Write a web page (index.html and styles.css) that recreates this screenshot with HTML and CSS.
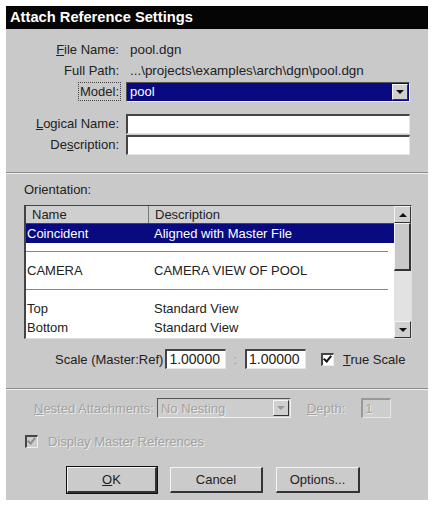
FILE: index.html
```html
<!DOCTYPE html>
<html lang="en">
<head>
    <meta charset="UTF-8">
    <meta name="viewport" content="width=device-width, initial-scale=1.0">
    <title>Attach Reference Settings</title>
    <link rel="stylesheet" href="styles.css">
</head>
<body>
    <div class="dialog">
        <div class="titlebar">Attach Reference Settings</div>

        <div class="form">
            <div class="row">
                <span class="label"><u>F</u>ile Name:</span>
                <span class="value">pool.dgn</span>
            </div>
            <div class="row">
                <span class="label">Full Path:</span>
                <span class="value">...\projects\examples\arch\dgn\pool.dgn</span>
            </div>
            <div class="row">
                <span class="label"><span class="focus">Model:</span></span>
                <div class="combo selected">
                    <span class="combo-text">pool</span>
                    <span class="combo-btn"><span class="arrow-down"></span></span>
                </div>
            </div>
            <div class="row row-gap">
                <span class="label"><u>L</u>ogical Name:</span>
                <div class="field"></div>
            </div>
            <div class="row">
                <span class="label">De<u>s</u>cription:</span>
                <div class="field"></div>
            </div>
        </div>

        <div class="sep"></div>

        <div class="orient">
            <div class="caption">Orientation:</div>
            <div class="listbox">
                <div class="list-main">
                    <div class="list-head">
                        <span class="col-name">Name</span>
                        <span class="col-desc">Description</span>
                    </div>
                    <div class="item item-sel">
                        <span class="col-name">Coincident</span>
                        <span class="col-desc">Aligned with Master File</span>
                    </div>
                    <div class="item-pad"></div>
                    <div class="item item-tall">
                        <span class="col-name">CAMERA</span>
                        <span class="col-desc">CAMERA VIEW OF POOL</span>
                    </div>
                    <div class="item-list">
                        <div class="item">
                            <span class="col-name">Top</span>
                            <span class="col-desc">Standard View</span>
                        </div>
                        <div class="item">
                            <span class="col-name">Bottom</span>
                            <span class="col-desc">Standard View</span>
                        </div>
                    </div>
                </div>
                <div class="scrollbar">
                    <span class="sb-btn"><span class="arrow-up"></span></span>
                    <span class="sb-thumb"></span>
                    <span class="sb-track"></span>
                    <span class="sb-btn"><span class="arrow-down"></span></span>
                </div>
            </div>

            <div class="scale-row">
                <span class="scale-label">Scale (Master:Ref)</span>
                <div class="field num">1.00000</div>
                <span class="colon">:</span>
                <div class="field num">1.00000</div>
                <span class="check checked"></span>
                <span class="check-label"><u>T</u>rue Scale</span>
            </div>
        </div>

        <div class="sep"></div>

        <div class="nested">
            <div class="nested-row">
                <span class="disabled"><u>N</u>ested Attachments:</span>
                <div class="combo combo-off">
                    <span class="combo-text disabled">No Nesting</span>
                    <span class="combo-btn"><span class="arrow-down arrow-off"></span></span>
                </div>
                <span class="disabled depth-label"><u>D</u>epth:</span>
                <div class="field field-off disabled">1</div>
            </div>
            <div class="display-row">
                <span class="check checked check-off"></span>
                <span class="disabled">Display Master References</span>
            </div>
        </div>

        <div class="buttons">
            <button class="btn btn-default"><u>O</u>K</button>
            <button class="btn btn-cancel">Cancel</button>
            <button class="btn btn-options">Options...</button>
        </div>
    </div>
</body>
</html>
```

FILE: styles.css
```css
body{
    margin: 0;
    background-color: #fff;
    font-family: "Liberation Sans", Arial, sans-serif;
    font-size: 13px;
    color: #222;
}
.dialog{
    margin: 6px 0 0 6px;
    width: 422px;
    height: 494px;
    background-color: #c9c9c9;
    display: flex;
    flex-direction: column;
}
.titlebar{
    height: 23px;
    line-height: 23px;
    background-color: #050505;
    color: #fff;
    font-weight: bold;
    font-size: 14.7px;
    padding-left: 4px;
}

/* top form */
.form{
    padding-top: 10px;
    display: flex;
    flex-direction: column;
}
.row{
    display: flex;
    align-items: center;
    height: 21px;
}
.row-gap{
    margin-top: 11px;
}
.label{
    width: 113px;
    text-align: right;
    flex-shrink: 0;
}
.value{
    margin-left: 11px;
    font-size: 13.4px;
}
.focus{
    outline: 1px dotted #444;
    outline-offset: 1px;
}
.combo{
    margin-left: 7px;
    width: 284px;
    height: 20px;
    box-sizing: border-box;
    border-top: 1px solid #555;
    border-left: 1px solid #555;
    border-bottom: 1px solid #eee;
    border-right: 1px solid #eee;
    display: flex;
    align-items: center;
}
.selected{
    background-color: #0a0a80;
    color: #fff;
}
.combo-text{
    flex: 1;
    padding-left: 3px;
}
.combo-btn{
    width: 16px;
    height: 16px;
    margin-right: 1px;
    box-sizing: border-box;
    background-color: #d0d0d0;
    border-top: 1px solid #f4f4f4;
    border-left: 1px solid #f4f4f4;
    border-right: 1px solid #333;
    border-bottom: 1px solid #333;
    display: flex;
    align-items: center;
    justify-content: center;
}
.arrow-down{
    width: 0;
    height: 0;
    border-left: 4px solid transparent;
    border-right: 4px solid transparent;
    border-top: 4px solid #111;
}
.arrow-up{
    width: 0;
    height: 0;
    border-left: 4px solid transparent;
    border-right: 4px solid transparent;
    border-bottom: 4px solid #111;
}
.field{
    margin-left: 7px;
    width: 284px;
    height: 20px;
    box-sizing: border-box;
    background-color: #fff;
    border-top: 2px solid #444;
    border-left: 2px solid #444;
    border-bottom: 1px solid #e6e6e6;
    border-right: 1px solid #e6e6e6;
}

.sep{
    height: 1px;
    background-color: #8a8a8a;
    border-bottom: 1px solid #f0f0f0;
}
.form + .sep{
    margin-top: 17px;
}

/* orientation list */
.orient{
    padding: 8px 0 0 18px;
}
.caption{
    height: 18px;
}
.listbox{
    margin-top: 5px;
    width: 388px;
    height: 134px;
    box-sizing: border-box;
    background-color: #fff;
    border-top: 1px solid #444;
    border-left: 2px solid #444;
    border-right: 1px solid #ddd;
    border-bottom: 1px solid #ddd;
    display: flex;
}
.list-main{
    flex: 1;
    display: flex;
    flex-direction: column;
}
.list-head{
    height: 18px;
    box-sizing: border-box;
    background-color: #cfcfcf;
    border-bottom: 1px solid #444;
    display: flex;
    align-items: center;
}
.list-head .col-name{
    border-right: 1px solid #777;
    height: 17px;
    line-height: 17px;
}
.item{
    height: 18px;
    display: flex;
    align-items: center;
}
.col-name{
    width: 116px;
    padding-left: 6px;
    flex-shrink: 0;
}
.col-desc{
    padding-left: 6px;
}
.item .col-name{
    padding-left: 1px;
    width: 121px;
}
.item-sel{
    height: 19px;
    background-color: #0a0a80;
    color: #fff;
}
.item-pad{
    height: 8px;
    border-bottom: 1px solid #888;
    margin-right: 6px;
}
.item-tall{
    height: 37px;
    border-bottom: 1px solid #888;
    margin-right: 6px;
}
.item-list{
    padding-top: 9px;
}
.item-list .item{
    height: 19px;
}
.scrollbar{
    width: 17px;
    display: flex;
    flex-direction: column;
}
.sb-btn{
    height: 17px;
    box-sizing: border-box;
    background-color: #d0d0d0;
    border-top: 1px solid #f4f4f4;
    border-left: 1px solid #f4f4f4;
    border-right: 1px solid #333;
    border-bottom: 1px solid #333;
    display: flex;
    align-items: center;
    justify-content: center;
}
.sb-thumb{
    height: 48px;
    box-sizing: border-box;
    background-color: #c9c9c9;
    border-top: 1px solid #f4f4f4;
    border-left: 1px solid #f4f4f4;
    border-right: 2px solid #333;
    border-bottom: 2px solid #333;
}
.sb-track{
    flex: 1;
    background-color: #e2e2e2;
}

.scale-row{
    display: flex;
    align-items: center;
    height: 22px;
    margin-top: 9px;
    margin-bottom: 18px;
    padding-left: 31px;
}
.scale-row .field{
    width: 61px;
    margin-left: 2px;
    line-height: 17px;
    padding-left: 2px;
    font-size: 14px;
}
.colon{
    margin-left: 7px;
    margin-right: 0;
    color: #999;
}
.colon + .field{
    margin-left: 8px;
}
.check{
    width: 13px;
    height: 13px;
    box-sizing: border-box;
    background-color: #fff;
    border-top: 2px solid #444;
    border-left: 2px solid #444;
    border-right: 1px solid #eee;
    border-bottom: 1px solid #eee;
    margin-left: 15px;
    position: relative;
}
.checked::after{
    content: "";
    position: absolute;
    left: 2px;
    top: -1px;
    width: 3px;
    height: 6px;
    border-right: 2px solid #111;
    border-bottom: 2px solid #111;
    transform: rotate(40deg);
}
.check-label{
    margin-left: 9px;
}

/* nested attachments */
.nested{
    padding: 8px 0 0 19px;
}
.nested-row{
    display: flex;
    align-items: center;
    height: 20px;
    padding-left: 9px;
}
.disabled{
    color: #a2a2a2;
    text-shadow: 1px 1px 0 #ececec;
}
.combo-off{
    margin-left: 3px;
    width: 134px;
    background-color: #cdcdcd;
}
.arrow-off{
    border-top-color: #9a9a9a;
}
.depth-label{
    margin-left: 16px;
}
.field-off{
    margin-left: 16px;
    width: 30px;
    background-color: #cdcdcd;
    line-height: 17px;
    padding-left: 2px;
    border-top-color: #999;
    border-left-color: #999;
}
.display-row{
    display: flex;
    align-items: center;
    margin-top: 14px;
    height: 18px;
}
.check-off{
    margin-left: 0;
    margin-right: 10px;
    background-color: #cdcdcd;
}
.check-off::after{
    border-color: #8d8d8d;
}

.buttons{
    display: flex;
    padding-left: 61px;
    margin-top: 17px;
    gap: 13px;
}
.btn{
    height: 26px;
    box-sizing: border-box;
    background-color: #cbcbcb;
    border-top: 1px solid #f4f4f4;
    border-left: 1px solid #f4f4f4;
    border-right: 2px solid #333;
    border-bottom: 2px solid #333;
    font-family: "Liberation Sans", Arial, sans-serif;
    font-size: 13px;
    color: #222;
    padding: 0;
}
.btn-default{
    width: 90px;
    outline: 1px solid #111;
}
.btn-cancel{
    width: 93px;
}
.btn-options{
    width: 84px;
}
```
